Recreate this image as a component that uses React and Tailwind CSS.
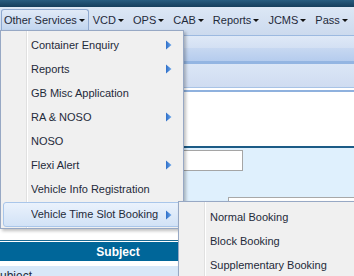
import React from 'react';

const topMenu = ['Other Services', 'VCD', 'OPS', 'CAB', 'Reports', 'JCMS', 'Pass', 'Admin'];

const serviceItems = [
  { label: 'Container Enquiry', sub: true },
  { label: 'Reports', sub: true },
  { label: 'GB Misc Application' },
  { label: 'RA & NOSO', sub: true },
  { label: 'NOSO' },
  { label: 'Flexi Alert', sub: true },
  { label: 'Vehicle Info Registration' },
  { label: 'Vehicle Time Slot Booking', sub: true, active: true },
];

const bookingItems = ['Normal Booking', 'Block Booking', 'Supplementary Booking'];

const Caret = () => (
  <svg width="6" height="3" viewBox="0 0 6 3" className="ml-[2px] shrink-0">
    <path d="M0 0h6L3 3z" fill="#111" />
  </svg>
);

const SubArrow = () => (
  <svg width="6" height="10" viewBox="0 0 6 10" className="shrink-0">
    <defs>
      <linearGradient id="arr" x1="0" y1="0" x2="1" y2="0">
        <stop offset="0" stopColor="#2f6fc9" />
        <stop offset="1" stopColor="#6aa6ea" />
      </linearGradient>
    </defs>
    <path d="M0 0.5L5.5 5L0 9.5z" fill="url(#arr)" />
  </svg>
);

const MenuRow = ({ item }) => (
  <div
    className={
      item.active
        ? 'mx-[2px] mt-[1px] flex h-[25px] items-center rounded-[3px] border border-[#a9c6ea] bg-gradient-to-b from-[#eaf2fc] to-[#d2e2f6] pl-[27px] pr-[8px]'
        : 'mx-[2px] flex h-[24px] items-center border border-transparent pl-[27px] pr-[8px]'
    }
  >
    <span className="flex-1 truncate">{item.label}</span>
    {item.sub && <SubArrow />}
  </div>
);

export default function App() {
  return (
    <div className="relative h-[276px] w-[354px] overflow-hidden bg-white font-['Liberation_Sans',Arial,sans-serif] text-[11px] text-[#1f2a3a]">
      {/* header band */}
      <div className="h-[7px] bg-gradient-to-b from-[#285d80] to-[#153e5c]" />

      {/* menu bar */}
      <div className="h-[29px] border-b border-[#9cb9e0] bg-gradient-to-b from-[#dce7f5] to-[#ccdaee] pt-[2px]">
        <div className="flex gap-[1px] pl-[1px] whitespace-nowrap">
          {topMenu.map((name, i) => (
            <div
              key={name}
              className={
                i === 0
                  ? 'flex h-[22px] items-center rounded-t-[3px] border border-b-0 border-[#8fa9cf] bg-gradient-to-b from-[#e1eaf7] to-[#bfd4ee] pl-[2px] pr-[3px]'
                  : 'flex h-[22px] items-center border border-transparent pl-[2px] pr-[4px]'
              }
            >
              <span>{name}</span>
              <Caret />
            </div>
          ))}
        </div>
      </div>

      {/* toolbar strips */}
      <div className="h-[12px] bg-gradient-to-b from-[#dfe9f7] to-[#d3e0f3]" />
      <div className="h-[13px] bg-gradient-to-b from-[#c7d8f1] to-[#b5ccee]" />
      <div className="h-[3px] bg-[#93b5e2]" />
      <div className="h-[23px] bg-gradient-to-b from-[#dbe6f6] to-[#cfdcf1]" />
      <div className="h-[1px] bg-[#a8c3e6]" />
      <div className="h-[2px] bg-white" />
      <div className="h-[2px] bg-[#8fb1de]" />

      {/* content */}
      <div className="h-[54px] bg-white" />
      <div className="h-[2px] bg-[#1b5b86]" />
      <div className="h-[80px] bg-[#dff0fd] pt-[2px]">
        <div className="ml-[183px] h-[21px] w-[60px] border border-[#a5a5a5] bg-white" />
        <div className="ml-[228px] mt-[26px] h-[31px] border-l border-t border-[#a8a8a8] bg-white" />
      </div>
      <div className="h-[12px] bg-white" />

      {/* table */}
      <div className="w-[236px]">
        <div className="h-[1px] bg-[#1a6a93]" />
        <div className="h-[1px] bg-white" />
        <div className="flex h-[19px] items-center justify-center bg-[#006699] text-[12px] font-bold text-white">
          Subject
        </div>
        <div className="h-[5px] bg-white" />
        <div className="flex h-[20px] items-center bg-[#d8e8f8] text-[12px]">
          <span className="-ml-[8px]">Subject</span>
        </div>
      </div>

      {/* Other Services dropdown */}
      <div className="absolute left-0 top-[30px] h-[199px] w-[184px] border border-[#97a8c4] bg-[#f0f0f0] pt-[2px] shadow-[2px_2px_3px_rgba(0,0,0,0.25)]">
        <div className="absolute bottom-0 left-[25px] top-0 w-[1px] bg-[#e0e0e0]" />
        <div className="absolute bottom-0 left-[26px] top-0 w-[1px] bg-white" />
        <div className="relative">
          {serviceItems.map((item) => (
            <MenuRow key={item.label} item={item} />
          ))}
        </div>
      </div>

      {/* Vehicle Time Slot Booking submenu */}
      <div className="absolute left-[178px] top-[201px] h-[90px] w-[200px] border border-[#97a8c4] bg-[#f0f0f0] pt-[3px] shadow-[2px_2px_3px_rgba(0,0,0,0.25)]">
        <div className="absolute bottom-0 left-[25px] top-0 w-[1px] bg-[#e0e0e0]" />
        <div className="absolute bottom-0 left-[26px] top-0 w-[1px] bg-white" />
        <div className="relative">
          {bookingItems.map((label) => (
            <div key={label} className="flex h-[24px] items-center pl-[31px] whitespace-nowrap">
              {label}
            </div>
          ))}
        </div>
      </div>
    </div>
  );
}
